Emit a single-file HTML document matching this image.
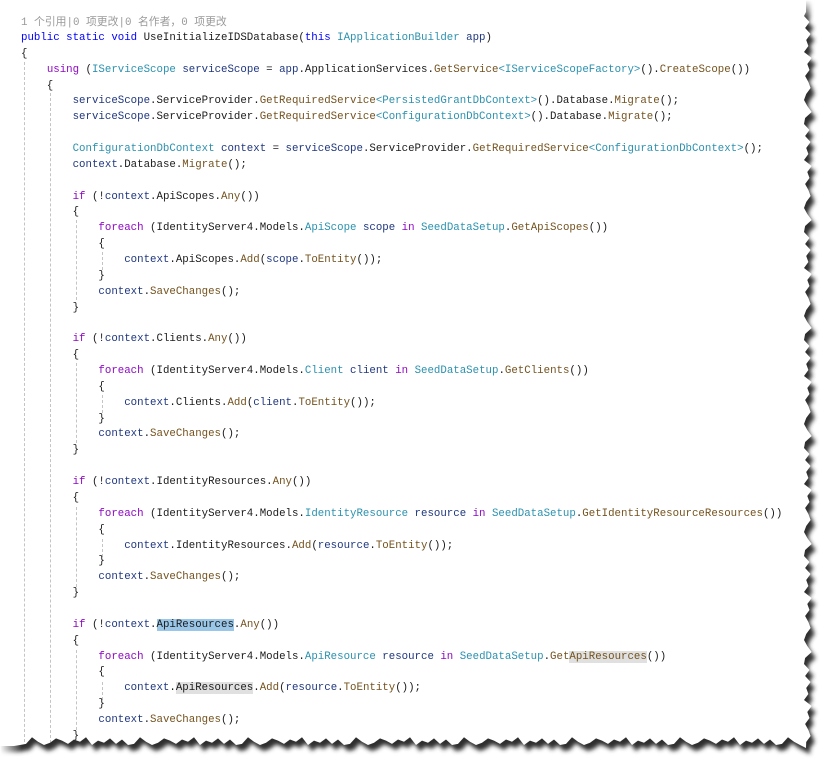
<!DOCTYPE html>
<html><head><meta charset="utf-8">
<style>
html,body{margin:0;padding:0;background:#fff;width:829px;height:772px;overflow:hidden;position:relative}
svg.bg{position:absolute;left:0;top:0}
pre{position:absolute;left:21px;top:31px;margin:0;font-family:"Liberation Mono","Noto Sans CJK SC",monospace;font-size:10.75px;line-height:15.86px;color:#1b1b1b;white-space:pre}
.lens{position:absolute;left:21px;top:13px;font-family:"Liberation Mono","Noto Sans CJK SC",monospace;font-size:10.83px;color:#9a9a9a;white-space:pre}
.k{color:#0000ff}.c{color:#8f08c4}.t{color:#2b91af}.m{color:#74531f}.v{color:#1f377f}
.sel{background:#9ac6e8}.hl{background:#e0e0e0}
.g{position:absolute;width:0;border-left:1px dashed #c4c4c4}
</style></head><body>
<div class="g" style="left:24px;top:62px;height:690px"></div>
<div class="g" style="left:50px;top:93px;height:655px"></div>
<div class="g" style="left:76px;top:220px;height:80px"></div>
<div class="g" style="left:102px;top:252px;height:18px"></div>
<div class="g" style="left:76px;top:363px;height:80px"></div>
<div class="g" style="left:102px;top:395px;height:18px"></div>
<div class="g" style="left:76px;top:507px;height:80px"></div>
<div class="g" style="left:102px;top:539px;height:18px"></div>
<div class="g" style="left:76px;top:650px;height:80px"></div>
<div class="g" style="left:102px;top:682px;height:18px"></div>
<div class="lens">1 个引用|0 项更改|0 名作者，0 项更改</div>
<pre><span class="k">public static void</span> UseInitializeIDSDatabase(<span class="k">this</span> <span class="t">IApplicationBuilder</span> <span class="v">app</span>)
{
    <span class="c">using</span> (<span class="t">IServiceScope</span> <span class="v">serviceScope</span> = <span class="v">app</span>.ApplicationServices.<span class="m">GetService</span><span class="t">&lt;IServiceScopeFactory&gt;</span>().<span class="m">CreateScope</span>())
    {
        <span class="v">serviceScope</span>.ServiceProvider.<span class="m">GetRequiredService</span><span class="t">&lt;PersistedGrantDbContext&gt;</span>().Database.<span class="m">Migrate</span>();
        <span class="v">serviceScope</span>.ServiceProvider.<span class="m">GetRequiredService</span><span class="t">&lt;ConfigurationDbContext&gt;</span>().Database.<span class="m">Migrate</span>();

        <span class="t">ConfigurationDbContext</span> <span class="v">context</span> = <span class="v">serviceScope</span>.ServiceProvider.<span class="m">GetRequiredService</span><span class="t">&lt;ConfigurationDbContext&gt;</span>();
        <span class="v">context</span>.Database.<span class="m">Migrate</span>();

        <span class="c">if</span> (!<span class="v">context</span>.ApiScopes.<span class="m">Any</span>())
        {
            <span class="c">foreach</span> (IdentityServer4.Models.<span class="t">ApiScope</span> <span class="v">scope</span> <span class="c">in</span> <span class="t">SeedDataSetup</span>.<span class="m">GetApiScopes</span>())
            {
                <span class="v">context</span>.ApiScopes.<span class="m">Add</span>(<span class="v">scope</span>.<span class="m">ToEntity</span>());
            }
            <span class="v">context</span>.<span class="m">SaveChanges</span>();
        }

        <span class="c">if</span> (!<span class="v">context</span>.Clients.<span class="m">Any</span>())
        {
            <span class="c">foreach</span> (IdentityServer4.Models.<span class="t">Client</span> <span class="v">client</span> <span class="c">in</span> <span class="t">SeedDataSetup</span>.<span class="m">GetClients</span>())
            {
                <span class="v">context</span>.Clients.<span class="m">Add</span>(<span class="v">client</span>.<span class="m">ToEntity</span>());
            }
            <span class="v">context</span>.<span class="m">SaveChanges</span>();
        }

        <span class="c">if</span> (!<span class="v">context</span>.IdentityResources.<span class="m">Any</span>())
        {
            <span class="c">foreach</span> (IdentityServer4.Models.<span class="t">IdentityResource</span> <span class="v">resource</span> <span class="c">in</span> <span class="t">SeedDataSetup</span>.<span class="m">GetIdentityResourceResources</span>())
            {
                <span class="v">context</span>.IdentityResources.<span class="m">Add</span>(<span class="v">resource</span>.<span class="m">ToEntity</span>());
            }
            <span class="v">context</span>.<span class="m">SaveChanges</span>();
        }

        <span class="c">if</span> (!<span class="v">context</span>.<span class="sel">ApiResources</span>.<span class="m">Any</span>())
        {
            <span class="c">foreach</span> (IdentityServer4.Models.<span class="t">ApiResource</span> <span class="v">resource</span> <span class="c">in</span> <span class="t">SeedDataSetup</span>.<span class="m">Get<span class="hl">ApiResources</span></span>())
            {
                <span class="v">context</span>.<span class="hl">ApiResources</span>.<span class="m">Add</span>(<span class="v">resource</span>.<span class="m">ToEntity</span>());
            }
            <span class="v">context</span>.<span class="m">SaveChanges</span>();
        }
    }
</pre>
<svg class="bg" width="829" height="772">
<defs>
<filter id="b2" x="-10%" y="-10%" width="120%" height="120%"><feGaussianBlur stdDeviation="2"/></filter>
<clipPath id="out"><polygon id="clipp" clip-rule="evenodd"/></clipPath>
<linearGradient id="fl" x1="0" x2="1" y1="0" y2="0"><stop offset="0" stop-color="#fff" stop-opacity="1"/><stop offset="1" stop-color="#fff" stop-opacity="0"/></linearGradient>
<linearGradient id="ft" x1="0" x2="0" y1="0" y2="1"><stop offset="0" stop-color="#fff" stop-opacity="1"/><stop offset="1" stop-color="#fff" stop-opacity="0"/></linearGradient>
</defs>
<polygon id="mask" fill="#ffffff" fill-rule="evenodd"/>
<g clip-path="url(#out)"><polygon id="sh2" fill="#2e2e2e" filter="url(#b2)"/></g>
<rect x="0" y="735" width="22" height="40" fill="url(#fl)"/>
<rect x="798" y="0" width="31" height="20" fill="url(#ft)"/>
</svg>
<script>
(function(){
var off=[0,5,1,6,2,4,0,7,3,5,1,4,6,2,0,3,7,1];
var pts=[];
pts.push([-30,-30],[806,-30],[806,12]);
var i=0;
for(var y=16;y<744;y+=6){pts.push([804+off[i%off.length]*1.1,y]);i++;}
pts.push([806,748]);
for(var x=800;x>14;x-=6){pts.push([x,745-off[i%off.length]*1.1]);i++;}
pts.push([14,746],[-30,746]);
function str(p,dx,dy){return p.map(function(q){return (q[0]+dx).toFixed(1)+','+(q[1]+dy).toFixed(1)}).join(' ');}
var s=str(pts,0,0);
var outer='-40,-40 870,-40 870,810 -40,810 -40,-40 ';
document.getElementById('mask').setAttribute('points',outer+s+' -40,-40');
document.getElementById('clipp').setAttribute('points',outer+s+' -40,-40');
document.getElementById('sh2').setAttribute('points',str(pts,4,6));
})();
</script>
</body></html>
